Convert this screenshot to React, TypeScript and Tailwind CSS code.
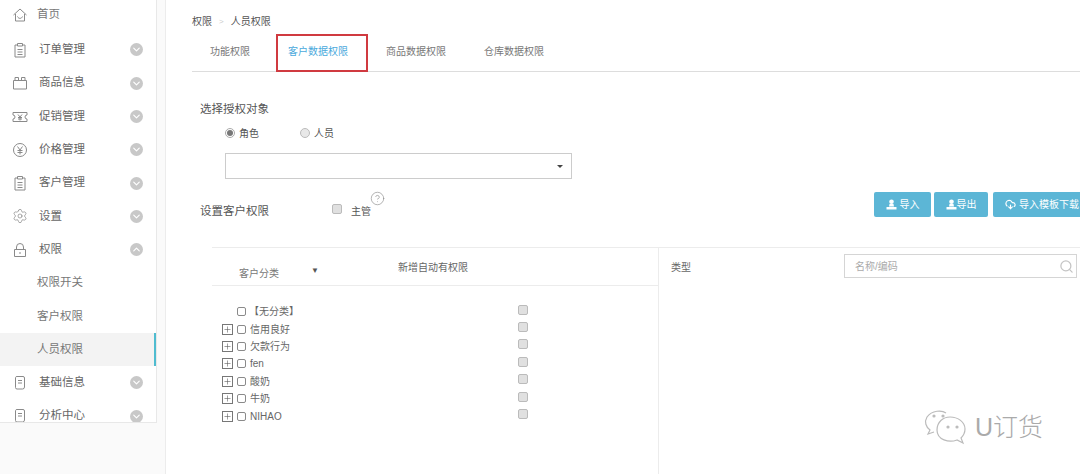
import { ChevronDown, ChevronUp, Search, Settings, CloudDownload, HelpCircle, Plus } from "lucide-react"
import type { ReactNode } from "react"

const stroke = { fill: "none", stroke: "#8a8a8a", strokeWidth: 1 }

function Ico({ children }: { children: ReactNode }) {
  return (
    <svg width="16" height="16" viewBox="0 0 16 16" {...stroke}>
      {children}
    </svg>
  )
}

const HomeIcon = () => (
  <Ico>
    <path d="M1.5 8 8 2l6.5 6M3.5 7v7h9V7" />
    <path d="M5.5 9.5c1 2.5 4 2.5 5 0" />
  </Ico>
)
const ClipIcon = () => (
  <Ico>
    <path d="M5.5 3H3v12h10V3h-2.500M5.500 1.500h5V4h-5zM5.500 7.500h5M5.500 10h5M5.500 12.500h5" />
  </Ico>
)
const GoodsIcon = () => (
  <Ico>
    <path d="M1.500 5.500h13V14h-13zM3 5.500V2.500h3.500v3M9.500 5.500v-3H13v3" />
  </Ico>
)
const PromoIcon = () => (
  <Ico>
    <path d="M1 3.500h14v2.500a2 2 0 0 0 0 4v2.500H1V10a2 2 0 0 0 0-4z" />
    <path d="m6 5.500 2 2.500 2-2.500M8 8v3.500M6 8.500h4M6 10h4" />
  </Ico>
)
const YenIcon = () => (
  <Ico>
    <circle cx="8" cy="8" r="6.500" />
    <path d="m5.500 4.500 2.500 3.500 2.500-3.500M8 8v4.500M5.500 8.500h5M5.500 10.500h5" />
  </Ico>
)
const DocIcon = () => (
  <Ico>
    <path d="M3.500 2.500a1.500 1.500 0 0 1 1.500-1h6a1.500 1.500 0 0 1 1.500 1.500v9a2 2 0 0 1-2 2H5a1.500 1.500 0 0 1-1.500-1.500zM6 5.500h4M6 8h4" />
  </Ico>
)
const LockIcon = () => (
  <Ico>
    <path d="M2.500 7.500h11V14.500h-11zM4.500 7.500V5a3.500 3.500 0 0 1 7 0v2.500M8 10v2" />
  </Ico>
)

const menu = [
  { label: "订单管理", icon: <ClipIcon /> },
  { label: "商品信息", icon: <GoodsIcon /> },
  { label: "促销管理", icon: <PromoIcon /> },
  { label: "价格管理", icon: <YenIcon /> },
  { label: "客户管理", icon: <ClipIcon /> },
  { label: "设置", icon: <Settings size={16} strokeWidth={1} color="#808080" /> },
]

const tree = ["信用良好", "欠款行为", "fen", "酸奶", "牛奶", "NIHAO"]

function MenuRow({ label, icon, open }: { label: string; icon: ReactNode; open?: boolean }) {
  return (
    <div className="flex h-[33.3px] shrink-0 items-center pl-[12px] pr-[13px] text-[11.5px] leading-none text-[#666]">
      <div className="flex w-[27px] items-center">{icon}</div>
      <span className="flex-1">{label}</span>
      <div className="flex h-[13px] w-[13px] items-center justify-center rounded-full bg-[#c8c8c8]">
        {open ? (
          <ChevronUp size={11} color="#fff" strokeWidth={2.5} />
        ) : (
          <ChevronDown size={11} color="#fff" strokeWidth={2.5} />
        )}
      </div>
    </div>
  )
}

function SubRow({ label, active }: { label: string; active?: boolean }) {
  return (
    <div
      className={`flex h-[33.3px] shrink-0 items-center pl-[37px] text-[11.500px] text-[#777] ${
        active ? "border-r-2 border-[#4fbcd0] bg-[#f3f3f3]" : ""
      }`}
    >
      {label}
    </div>
  )
}

function Check() {
  return <span className="block h-[9px] w-[9px] rounded-[2px] border border-[#8a8a8a] bg-white" />
}

function GrayCheck({ className = "" }: { className?: string }) {
  return <span className={`block h-[10px] w-[10px] rounded-[2px] border border-[#bbb] bg-[#e0e0e0] ${className}`} />
}

function ActionButton({ icon, label, className }: { icon: ReactNode; label: string; className: string }) {
  return (
    <div className={`flex h-[25px] shrink-0 items-center justify-center rounded-[2px] bg-[#5cb6d6] text-[10px] whitespace-nowrap text-white ${className}`}>
      {icon}
      {label}
    </div>
  )
}

const TrayIcon = () => (
  <svg width="11" height="11" viewBox="0 0 11 11" fill="#fff">
    <circle cx="5.500" cy="2.800" r="2.300" />
    <path d="M3.500 5h4l.5 2.500H3z" />
    <path d="M.5 8h10v2.500H.5z" />
  </svg>
)

export default function App() {
  return (
    <div
      className="relative flex h-[474px] w-[1080px] overflow-hidden bg-white"
      style={{ fontFamily: '"Liberation Sans", "Noto Sans CJK SC", sans-serif' }}
    >
      <div className="flex h-[474px] w-[166px] shrink-0 flex-col border-r border-[#ececec] bg-[#fafafa]">
        <div className="flex h-[423px] w-[157px] shrink-0 flex-col overflow-hidden border-r border-b border-[#e8e8e8] bg-white">
          <div className="-mt-[2px] flex h-[33.300px] shrink-0 items-center pl-[12px] text-[11.500px] text-[#777]">
            <div className="flex w-[25px] items-center">
              <HomeIcon />
            </div>
            首页
          </div>
          <div className="mt-[2px]" />
          {menu.map((m) => (
            <MenuRow key={m.label} label={m.label} icon={m.icon} />
          ))}
          <MenuRow label="权限" icon={<LockIcon />} open />
          <SubRow label="权限开关" />
          <SubRow label="客户权限" />
          <SubRow label="人员权限" active />
          <MenuRow label="基础信息" icon={<DocIcon />} />
          <MenuRow label="分析中心" icon={<DocIcon />} />
        </div>
      </div>

      <div className="flex min-w-0 flex-1 flex-col pt-[15px]">
        <div className="flex items-center pl-[26px] text-[10px] leading-[13px] text-[#555]">
          权限
          <span className="mx-[7px] text-[8px] text-[#ccc]">&gt;</span>
          人员权限
        </div>

        <div className="relative mt-[6px] ml-[26px] flex h-[38px] items-center border-b border-[#ddd] pb-[3px] text-[10px] text-[#777]">
          <span className="ml-[18px]">功能权限</span>
          <span className="ml-[38px] text-[#4aa9dc]">客户数据权限</span>
          <span className="ml-[38px]">商品数据权限</span>
          <span className="ml-[38px]">仓库数据权限</span>
          <div className="absolute top-0 left-[84px] h-[38px] w-[92px] border-2 border-[#d03a40]" />
        </div>

        <div className="mt-[30px] pl-[34px] text-[11.500px] leading-[15px] text-[#555]">选择授权对象</div>

        <div className="mt-[10px] flex items-center pl-[59px] text-[10px] leading-[14px] text-[#555]">
          <span className="-mt-[2px] flex h-[10px] w-[10px] items-center justify-center rounded-full border border-[#aaa] bg-white">
            <span className="h-[6px] w-[6px] rounded-full bg-[#777]" />
          </span>
          <span className="ml-[4px]">角色</span>
          <span className="-mt-[2px] ml-[41px] h-[10px] w-[10px] rounded-full border border-[#bbb] bg-[#e8e8e8]" />
          <span className="ml-[4px]">人员</span>
        </div>

        <div className="mt-[12px] ml-[59px] flex h-[26px] w-[347px] items-center justify-end border border-[#ccc] pr-[8px]">
          <span className="h-0 w-0 border-x-[3px] border-t-[3px] border-x-transparent border-t-[#444]" />
        </div>

        <div className="mt-[13px] flex h-[25px] items-center pl-[34px]">
          <span className="w-[132px] pt-[14px] text-[11.500px] text-[#555]">设置客户权限</span>
          <GrayCheck className="mt-[8px]" />
          <span className="relative ml-[9px] pt-[14px] text-[10px] text-[#555]">
            主管
            <HelpCircle size={15} strokeWidth={1} color="#888" className="absolute top-[1px] left-[19px]" />
          </span>
          <div className="-mr-[11px] ml-auto flex gap-[4px]">
            <ActionButton icon={<TrayIcon />} label="导入" className="-mr-[1px] w-[57px] gap-[3px]" />
            <ActionButton icon={<TrayIcon />} label="导出" className="w-[54px]" />
            <ActionButton
              icon={<CloudDownload size={11} color="#fff" strokeWidth={2.500} />}
              label="导入模板下载"
              className="ml-[1px] w-[98px] gap-[3px]"
            />
          </div>
        </div>

        <div className="mt-[30px] ml-[46px] flex min-h-0 flex-1 border-t border-[#ececec]">
          <div className="w-[447px] shrink-0 border-r border-[#ececec]">
            <div className="flex h-[38px] items-center border-b border-[#ececec] text-[10px] text-[#777]">
              <span className="ml-[27px] pt-[13px]">客户分类</span>
              <span className="ml-[32px] pt-[8px] text-[8px] text-[#555]">▼</span>
              <span className="ml-[79px] mt-[2px] text-[#666]">新增自动有权限</span>
            </div>
            <div className="pt-[17px] pl-[10px] text-[10px] text-[#666]">
              <div className="flex h-[17.400px] items-center">
                <span className="w-[15px]" />
                <Check />
                <span className="ml-[3px] w-[269px] whitespace-nowrap">【无分类】</span>
                <GrayCheck className="mb-[4px]" />
              </div>
              {tree.map((t) => (
                <div key={t} className="flex h-[17.400px] items-center">
                  <span className="flex h-[11px] w-[11px] items-center justify-center border border-[#777]">
                    <Plus size={9} color="#555" strokeWidth={1.500} />
                  </span>
                  <span className="w-[4px]" />
                  <Check />
                  <span className="ml-[4px] w-[268px]">{t}</span>
                  <GrayCheck className="mb-[4px]" />
                </div>
              ))}
            </div>
          </div>

          <div className="flex h-[38px] flex-1 items-start pt-[6px] pl-[12px] text-[10px] text-[#666]">
            <span className="mt-[6px]">类型</span>
            <div className="ml-[153px] flex h-[24px] w-[233px] items-center justify-between border border-[#d5d5d5] pr-[2px] pl-[10px] text-[#aaa]">
              名称/编码
              <Search size={15} color="#c4c4c4" strokeWidth={2} />
            </div>
          </div>
        </div>
      </div>

      <div className="absolute top-[409px] left-[924px] flex items-center gap-[7px]">
        <svg width="44" height="36" viewBox="0 0 44 36" fill="none" stroke="#bbb" strokeWidth="1.200">
          <path d="M22 4C18 1 8 1 3 8c-3 5-1 10 3 13l-2 4 6-2" />
          <path d="M26 8c8 0 15 5 15 12 0 4-2 7-4 9l2 5-6-3c-8 3-20 0-20-10 0-8 6-13 13-13z" />
          <circle cx="24" cy="18" r="1" fill="#bbb" />
          <circle cx="33" cy="18" r="1" fill="#bbb" />
          <circle cx="10" cy="7" r="1" fill="#bbb" />
          <circle cx="19" cy="7" r="1" fill="#bbb" />
        </svg>
        <span className="text-[25px] leading-none font-light text-[#aaa]">U订货</span>
      </div>
    </div>
  )
}
